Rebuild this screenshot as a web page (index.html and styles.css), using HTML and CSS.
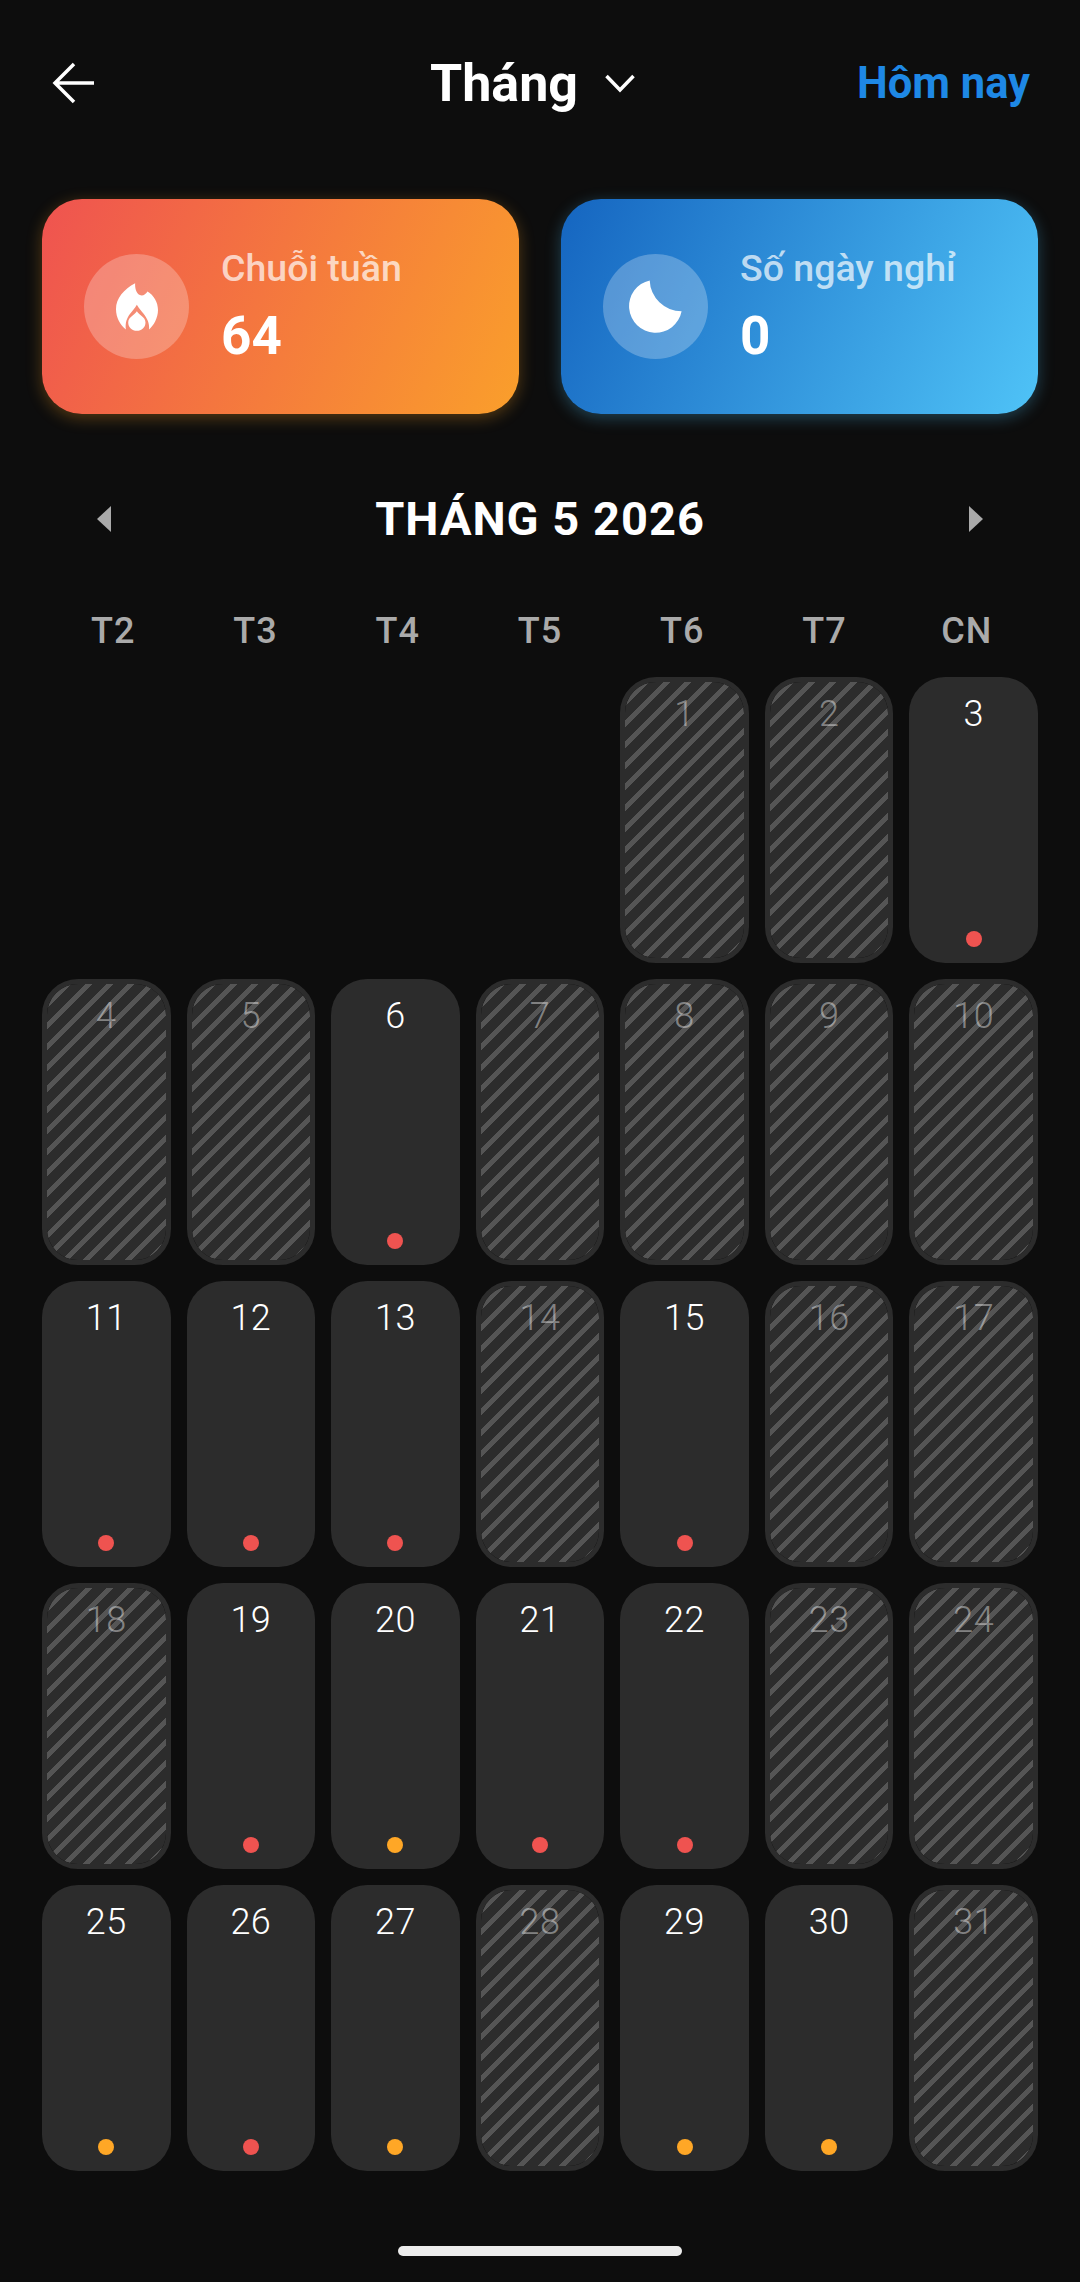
FILE: index.html
```html
<!DOCTYPE html>
<html lang="vi">
<head>
<meta charset="utf-8">
<title>Tháng</title>
<link rel="stylesheet" href="styles.css">
</head>
<body>
<main class="screen">
  <header class="topbar">
    <svg class="back" viewBox="0 0 44 44" width="44" height="44"><path d="M42 22H3M22 3 3 22l19 19" fill="none" stroke="#fff" stroke-width="3.5"/></svg>
    <div class="view-picker">
      <span class="view-title">Tháng</span>
      <svg class="chev" viewBox="0 0 30 20" width="30" height="20"><path d="M1.500 2 15 16 28.500 2" fill="none" stroke="#fff" stroke-width="3.5"/></svg>
    </div>
    <span class="today">Hôm nay</span>
  </header>

  <section class="cards">
    <div class="card card-streak">
      <div class="card-icon">
        <svg viewBox="0 0 42.300 48" width="42" height="48"><path fill="#fff" fill-rule="evenodd" d="M19.300 0C19 4 20 10 24 12C27 13.500 30 11 31.700 8.300C38 12 42.300 19 42.300 27C42.300 35 38 42.500 33.300 46.700C34 40 31 35 28 31C25.500 28 23 25 21 21.700C19 25 16.500 28 14 31C11 35 9 40 10 46.700C4.500 42.500 0 35 0 26C0 15 8 6 19.300 0ZM21 28.300C23 32 29.700 34 29.700 39.500C29.700 44.500 25.700 48 21 48C16.300 48 12.300 44.500 12.300 39.500C12.300 34 19 32 21 28.300Z"/></svg>
      </div>
      <div class="card-text"><span class="card-label">Chuỗi tuần</span><span class="card-value">64</span></div>
    </div>
    <div class="card card-rest">
      <div class="card-icon">
        <svg viewBox="0 0 53 53" width="53" height="53"><path fill="#fff" d="M20.700.4A26.500 26.500 0 1 0 52.600 31.300A32 32 0 0 1 20.700.4Z"/></svg>
      </div>
      <div class="card-text"><span class="card-label">Số ngày nghỉ</span><span class="card-value">0</span></div>
    </div>
  </section>

  <nav class="month-nav">
    <span class="tri tri-left"></span>
    <h1 class="month-title">THÁNG 5 2026</h1>
    <span class="tri tri-right"></span>
  </nav>

  <div class="weekdays">
    <span>T2</span><span>T3</span><span>T4</span><span>T5</span><span>T6</span><span>T7</span><span>CN</span>
  </div>

  <div class="grid">
    <div></div><div></div><div></div><div></div>
    <div class="day off">1</div>
    <div class="day off">2</div>
    <div class="day">3<i class="dot red"></i></div>

    <div class="day off">4</div>
    <div class="day off">5</div>
    <div class="day">6<i class="dot red"></i></div>
    <div class="day off">7</div>
    <div class="day off">8</div>
    <div class="day off">9</div>
    <div class="day off">10</div>

    <div class="day">11<i class="dot red"></i></div>
    <div class="day">12<i class="dot red"></i></div>
    <div class="day">13<i class="dot red"></i></div>
    <div class="day off">14</div>
    <div class="day">15<i class="dot red"></i></div>
    <div class="day off">16</div>
    <div class="day off">17</div>

    <div class="day off">18</div>
    <div class="day">19<i class="dot red"></i></div>
    <div class="day">20<i class="dot orange"></i></div>
    <div class="day">21<i class="dot red"></i></div>
    <div class="day">22<i class="dot red"></i></div>
    <div class="day off">23</div>
    <div class="day off">24</div>

    <div class="day">25<i class="dot orange"></i></div>
    <div class="day">26<i class="dot red"></i></div>
    <div class="day">27<i class="dot orange"></i></div>
    <div class="day off">28</div>
    <div class="day">29<i class="dot orange"></i></div>
    <div class="day">30<i class="dot orange"></i></div>
    <div class="day off">31</div>
  </div>

  <div class="home-bar"></div>
</main>
</body>
</html>
```
FILE: styles.css
```css
* { box-sizing: border-box; }
html, body { margin: 0; padding: 0; background: #0d0d0d; }
body { font-family: Roboto, "Noto Sans", sans-serif; color: #fff; }
.screen { width: 1080px; height: 2282px; display: flex; flex-direction: column; padding: 0 42px; overflow: hidden; }

.topbar { height: 199px; padding: 61px 8px 0 10px; display: grid; grid-template-columns: 1fr auto 1fr; align-items: start; }
.back { display: block; }
.view-picker { display: flex; align-items: flex-start; gap: 27px; height: 44px; padding-right: 17px; }
.view-title { font-size: 52px; font-weight: 700; line-height: 44px; padding-top: 1px; }
.chev { display: block; margin-top: 13px; }
.today { justify-self: end; font-size: 43.500px; font-weight: 700; color: #1e88e5; line-height: 44px; padding-top: 1px; }

.cards { display: flex; gap: 42px; }
.card { flex: 1; height: 215px; border-radius: 40px; padding-left: 42px; display: flex; align-items: center; gap: 32px; }
.card-streak { background: linear-gradient(114deg, #ef5350, #fa9f2b); box-shadow: 0 4px 16px rgba(255,167,38,.3); }
.card-rest { background: linear-gradient(114deg, #1565c0, #4fc3f7); box-shadow: 0 4px 16px rgba(79,195,247,.3); }
.card-icon { width: 105px; height: 105px; border-radius: 50%; background: rgba(255,255,255,.25); display: flex; align-items: center; justify-content: center; flex: none; }
.card-icon svg { display: block; }
.card-text { display: flex; flex-direction: column; gap: 18px; }
.card-label { font-size: 37.500px; font-weight: 500; line-height: 40px; color: rgba(255,255,255,.7); }
.card-value { font-size: 53px; font-weight: 700; line-height: 60px; }

.month-nav { height: 72px; margin-top: 69px; display: flex; align-items: center; justify-content: space-between; padding: 0 55px; }
.month-title { margin: 0; font-size: 47px; font-weight: 700; line-height: 72px; letter-spacing: 1px; }
.tri { width: 0; height: 0; border-top: 13px solid transparent; border-bottom: 13px solid transparent; }
.tri-left { border-right: 14px solid #aaa; }
.tri-right { border-left: 14px solid #aaa; }

.weekdays { display: flex; margin-top: 54px; height: 44px; align-items: center; }
.weekdays span { flex: 1; text-align: center; font-size: 36px; font-weight: 500; letter-spacing: 1px; color: #aaa; }

.grid { margin-top: 24px; display: grid; grid-template-columns: repeat(7, 1fr); column-gap: 16px; grid-auto-rows: 286px; row-gap: 16px; }
.day { position: relative; background: #2c2c2c; border-radius: 36px; text-align: center; font-size: 36px; font-weight: 300; letter-spacing: .5px; line-height: 40px; padding-top: 17px; color: #fff; }
.day.off { border: 5px solid #2c2c2c; padding-top: 12px; color: rgba(255,255,255,.42); background: repeating-linear-gradient(135deg, #555 0 2.700px, #2c2c2c 2.700px 12.150px, #555 12.150px 14.850px); background-clip: padding-box; }
.dot { position: absolute; left: 50%; bottom: 16px; width: 16px; height: 16px; margin-left: -8px; border-radius: 50%; }
.red { background: #ef5350; }
.orange { background: #ffa726; }

.home-bar { position: absolute; left: 398px; top: 2246px; width: 284px; height: 10px; border-radius: 5px; background: #ececec; }
```
